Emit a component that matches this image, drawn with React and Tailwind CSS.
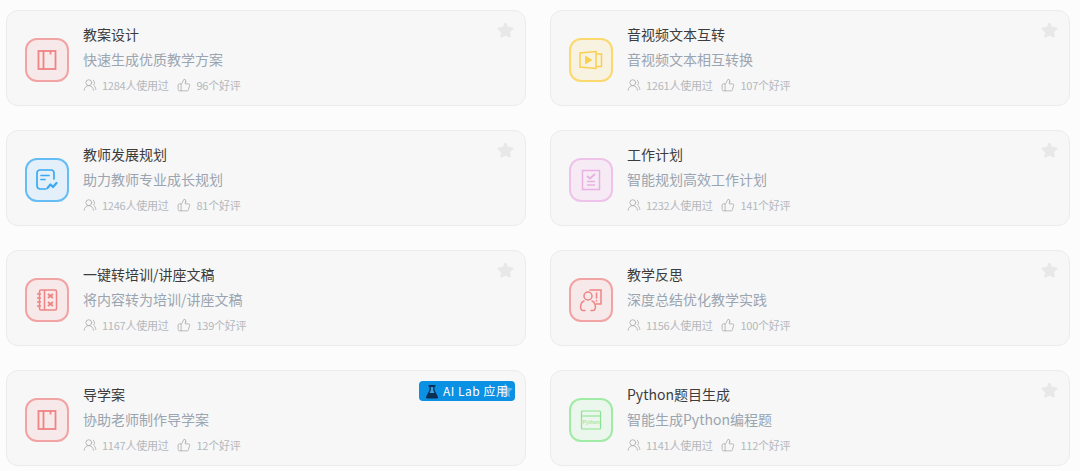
import { Star, UsersRound, ThumbsUp } from 'lucide-react'

const NotebookIcon = () => (
  <svg width="22" height="22" viewBox="0 0 22 22" fill="none" stroke="currentColor" strokeWidth="1.8">
    <rect x="2.500" y="2" width="17" height="18" />
    <path d="M7.500 2v18M14.500 2v3.500" />
  </svg>
)

const VideoIcon = () => (
  <svg width="26" height="24" viewBox="0 0 26 24" fill="none" stroke="currentColor" strokeWidth="1.500">
    <path d="M2 5 18 3.500v17L2 19z" />
    <path d="M18 6h5.500v12.500H18" />
    <path d="M7 7.500l7.500 4.500L7 16.500z" fill="currentColor" stroke="none" />
  </svg>
)

const ChartNoteIcon = () => (
  <svg width="24" height="24" viewBox="0 0 24 24" fill="none" stroke="currentColor" strokeWidth="1.700" strokeLinecap="round" strokeLinejoin="round">
    <path d="M11 21H5a3 3 0 0 1-3-3V5a3 3 0 0 1 3-3h11a3 3 0 0 1 3 3v6" />
    <path d="M6 7.500h8M6 11.500h4" />
    <path d="M12.500 20l3-3.500 2.500 2.500 3.500-4" strokeWidth="2.200" />
  </svg>
)

const ChecklistIcon = () => (
  <svg width="20" height="22" viewBox="0 0 20 22" fill="none" stroke="currentColor" strokeWidth="1.500">
    <rect x="1.500" y="1.500" width="17" height="19" />
    <path d="M6 7l3 2.500L14 5" strokeWidth="2" />
    <path d="M6 12.500h8M6 16h8" />
  </svg>
)

const SpiralIcon = () => (
  <svg width="22" height="24" viewBox="0 0 22 24" fill="none" stroke="currentColor" strokeWidth="1.500">
    <rect x="3.500" y="2" width="17" height="20" rx="1.500" />
    <path d="M8.500 2v20M1 6h4M1 10h4M1 14h4M1 18h4" />
    <path d="M12 6l5 4M17 6l-5 4M12 14l5 4M17 14l-5 4" strokeWidth="2" />
  </svg>
)

const ReflectIcon = () => (
  <svg width="26" height="26" viewBox="0 0 26 26" fill="none" stroke="currentColor" strokeWidth="1.500" strokeLinecap="round">
    <path d="M12 3h11v14h-5" />
    <circle cx="10" cy="9" r="4" />
    <path d="M6 14c-3 1-4 5-3 8 .3 1 1 1.500 2 1.500h2M14 14c3 1 4 5 3 8-.3 1-1 1.500-2 1.500h-2" />
    <path d="M18.500 6v5M18.500 13.500v.5" />
  </svg>
)

const PythonIcon = () => (
  <svg width="22" height="22" viewBox="0 0 22 22" fill="none" stroke="currentColor">
    <rect x="1.500" y="2" width="19" height="18" rx="1" strokeWidth="1.200" />
    <path d="M1.500 7h19" strokeWidth="1.100" />
    <text x="11" y="14.500" textAnchor="middle" fontSize="5.500" fontFamily="Liberation Sans, sans-serif" fill="currentColor" stroke="none">Python</text>
  </svg>
)

const FlaskIcon = () => (
  <svg width="14" height="15" viewBox="0 0 14 15">
    <path d="M3.500 1h7v1.500h-1v3.500l3.500 7c.3.700-.1 1.500-1 1.500H2c-.9 0-1.300-.8-1-1.500L4.500 6V2.500h-1z" fill="#0b2f55" />
    <path d="M5.800 3h2.400v3.300L9.500 9h-5l1.300-2.700z" fill="#3b9fe0" />
  </svg>
)

const tools = [
  { title: '教案设计', desc: '快速生成优质教学方案', used: 1284, likes: 96, tone: 'red', icon: NotebookIcon },
  { title: '音视频文本互转', desc: '音视频文本相互转换', used: 1261, likes: 107, tone: 'yellow', icon: VideoIcon },
  { title: '教师发展规划', desc: '助力教师专业成长规划', used: 1246, likes: 81, tone: 'blue', icon: ChartNoteIcon },
  { title: '工作计划', desc: '智能规划高效工作计划', used: 1232, likes: 141, tone: 'pink', icon: ChecklistIcon },
  { title: '一键转培训/讲座文稿', desc: '将内容转为培训/讲座文稿', used: 1167, likes: 139, tone: 'red', icon: SpiralIcon },
  { title: '教学反思', desc: '深度总结优化教学实践', used: 1156, likes: 100, tone: 'red', icon: ReflectIcon },
  { title: '导学案', desc: '协助老师制作导学案', used: 1147, likes: 12, tone: 'red', icon: NotebookIcon, lab: true },
  { title: 'Python题目生成', desc: '智能生成Python编程题', used: 1141, likes: 112, tone: 'green', icon: PythonIcon }
]

const tones = {
  red: 'border-[#f2a3a3] bg-[#f7e9e9] text-[#ee8484]',
  yellow: 'border-[#fbd96f] bg-[#f8f2e0] text-[#f9cf4e]',
  blue: 'border-[#66bdf6] bg-[#e3eff9] text-[#3ba9f2]',
  pink: 'border-[#eec3ea] bg-[#f6ebf5] text-[#e9b0e4]',
  green: 'border-[#a0ebA5] bg-[#ebf6ec] text-[#8be491]'
}

function ToolCard({ tool }) {
  const Icon = tool.icon
  return (
    <div className="relative h-[96px] rounded-xl border border-[#ebebeb] bg-[#f7f7f7] flex items-center pl-[18px] pt-1">
      <div className={`w-[44px] h-[44px] shrink-0 rounded-xl border-2 flex items-center justify-center ${tones[tool.tone]}`}>
        <Icon />
      </div>
      <div className="ml-[14px] -mt-1">
        <div className="text-sm leading-[20px] text-[#3c3c3c]">{tool.title}</div>
        <div className="text-sm leading-[20px] mt-[5px] text-[#9aa5b1]">{tool.desc}</div>
        <div className="flex items-center text-[11px] leading-[16px] mt-[8px] text-[#b4b8bd]">
          <UsersRound size={14} strokeWidth={1.3} className="text-[#a8a8a8]" />
          <span className="ml-[5px] tracking-[-0.25px]">{tool.used}人使用过</span>
          <ThumbsUp size={14} strokeWidth={1.3} className="ml-[9px] text-[#a8a8a8]" />
          <span className="ml-[5px] tracking-[-0.25px]">{tool.likes}个好评</span>
        </div>
      </div>
      {tool.lab && (
        <div className="absolute top-[10px] right-[10px] h-[20px] w-[96px] rounded bg-[#0a91e4] text-white text-xs flex items-center pl-[6px] gap-[4px] tracking-[0.5px]">
          <FlaskIcon />
          <span>AI Lab 应用</span>
        </div>
      )}
      <Star size={17} className={`absolute top-[11px] right-[11px] ${tool.lab ? 'fill-[#e8e8e8]/40 text-transparent' : 'fill-[#e8e8e8] text-[#e8e8e8]'}`} />
    </div>
  )
}

export default function App() {
  return (
    <div
      className="h-[471px] overflow-hidden bg-[#fcfcfc] pt-[10px] pl-[6px] pr-[10px]"
      style={{ fontFamily: '"Noto Sans CJK SC", "Noto Sans", sans-serif' }}
    >
      <div className="grid grid-cols-2 gap-x-[24px] gap-y-[24px]">
        {tools.map(tool => (
          <ToolCard key={tool.title} tool={tool} />
        ))}
      </div>
    </div>
  )
}
